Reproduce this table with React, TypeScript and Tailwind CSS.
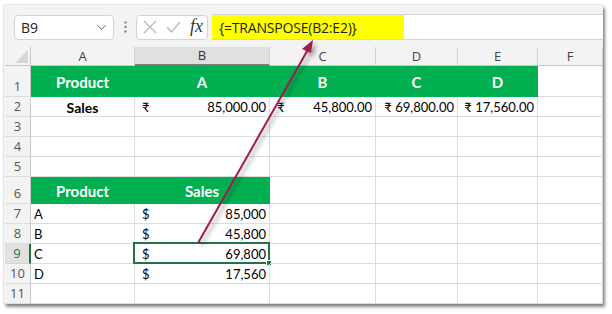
import { ChevronDown } from 'lucide-react'

const cols = ['A', 'B', 'C', 'D', 'E', 'F']
const gridLine = 'border-r border-b border-[#dcdcdc]'

// cell rows, index 0 = row 1
type Cell = { text?: string; cur?: string; kind?: 'head' | 'bold' | 'num' | 'left' | 'inr' }

const rows: { h: string; cells: Cell[] }[] = [
  { h: 'h-[31px]', cells: [{ text: 'Product', kind: 'head' }, { text: 'A', kind: 'head' }, { text: 'B', kind: 'head' }, { text: 'C', kind: 'head' }, { text: 'D', kind: 'head' }, {}] },
  { h: 'h-[20px]', cells: [{ text: 'Sales', kind: 'bold' }, { text: '85,000.00', cur: '₹', kind: 'num' }, { text: '45,800.00', cur: '₹', kind: 'num' }, { text: '₹ 69,800.00', kind: 'inr' }, { text: '₹ 17,560.00', kind: 'inr' }, {}] },
  { h: 'h-[20px]', cells: [{}, {}, {}, {}, {}, {}] },
  { h: 'h-[20px]', cells: [{}, {}, {}, {}, {}, {}] },
  { h: 'h-[20px]', cells: [{}, {}, {}, {}, {}, {}] },
  { h: 'h-[27px]', cells: [{ text: 'Product', kind: 'head' }, { text: 'Sales', kind: 'head' }, {}, {}, {}, {}] },
  { h: 'h-[20px]', cells: [{ text: 'A', kind: 'left' }, { text: '85,000', cur: '$', kind: 'num' }, {}, {}, {}, {}] },
  { h: 'h-[20px]', cells: [{ text: 'B', kind: 'left' }, { text: '45,800', cur: '$', kind: 'num' }, {}, {}, {}, {}] },
  { h: 'h-[20px]', cells: [{ text: 'C', kind: 'left' }, { text: '69,800', cur: '$', kind: 'num' }, {}, {}, {}, {}] },
  { h: 'h-[20px]', cells: [{ text: 'D', kind: 'left' }, { text: '17,560', cur: '$', kind: 'num' }, {}, {}, {}, {}] },
  { h: 'h-[20px]', cells: [{}, {}, {}, {}, {}, {}] },
]

function DataCell({ cell, selected }: { cell: Cell; selected?: boolean }) {
  if (cell.kind === 'head') {
    return (
      <div className="flex items-center justify-center bg-[#00b050] border-r border-b border-[#00b050] pt-[2px] text-[15px] leading-[18px] font-bold text-white">
        {cell.text}
      </div>
    )
  }
  return (
    <div className={`relative flex items-end px-[3px] pb-[1px] text-[13px] leading-[15px] text-black ${gridLine}`}>
      {cell.kind === 'bold' && <span className="w-full text-center text-[14px] font-bold">{cell.text}</span>}
      {cell.kind === 'left' && <span>{cell.text}</span>}
      {cell.kind === 'inr' && <span className="w-full text-right">{cell.text}</span>}
      {cell.kind === 'num' && (
        <div className="flex w-full justify-between pl-[4px]">
          <span>{cell.cur}</span>
          <span>{cell.text}</span>
        </div>
      )}
      {selected && (
        <div className="absolute -left-[2px] -top-[2px] -right-[1px] -bottom-[1px] border-2 border-[#217346]">
          <div className="absolute -right-[4px] -bottom-[4px] w-[6px] h-[6px] bg-[#217346] border border-white" />
        </div>
      )}
    </div>
  )
}

export default function App() {
  return (
    <div className="relative w-[612px] h-[314px] bg-white pt-[5px] pl-[4px] font-['Lato',sans-serif] overflow-hidden">
      <div className="w-[599px] h-[299px] bg-[#f3f3f3] shadow-[2px_3px_3px_rgba(0,0,0,0.45),0_0_2px_rgba(0,0,0,0.25)] overflow-hidden">
        {/* Formula bar */}
        <div className="flex items-center pt-[9px] h-[35px]">
          <div className="ml-[10px] w-[100px] h-[25px] flex items-center justify-between bg-white border border-[#d4d4d4] rounded-[4px] pl-[6px] pr-[4px] text-[14px] text-[#222] font-['Open_Sans',sans-serif]">
            <span>B9</span>
            <ChevronDown className="w-[15px] h-[15px] text-[#555]" strokeWidth={1.5} />
          </div>
          <div className="w-[22px] flex justify-center">
            <svg width="3" height="12" viewBox="0 0 3 12">
              <circle cx="1.5" cy="1.5" r="1.2" fill="#8a8a8a" />
              <circle cx="1.5" cy="6" r="1.2" fill="#8a8a8a" />
              <circle cx="1.5" cy="10.5" r="1.2" fill="#8a8a8a" />
            </svg>
          </div>
          <div className="w-[72px] h-[25px] flex items-center bg-white border border-[#d4d4d4] rounded-[4px] pl-[6px] gap-[9px]">
            <svg width="14" height="14" viewBox="0 0 14 14" stroke="#b8b8b8" strokeWidth="1.3" fill="none">
              <path d="M1 1 L13 13 M13 1 L1 13" />
            </svg>
            <svg width="15" height="12" viewBox="0 0 15 12" stroke="#b8b8b8" strokeWidth="1.3" fill="none">
              <path d="M1 6 L5.5 11 L14 1" />
            </svg>
            <span className="font-['Liberation_Serif',serif] italic text-[18px] leading-none text-[#333] -mt-[2px]">fx</span>
          </div>
          <div className="ml-[4px] flex-1 h-[26px] flex bg-white border-y border-[#d4d4d4]">
            <div className="w-[192px] h-full bg-[#ffff00] flex items-center pl-[7px] text-[14px] text-[#222] font-['Open_Sans',sans-serif] tracking-[-0.2px]">
              {'{=TRANSPOSE(B2:E2)}'}
            </div>
          </div>
        </div>

        {/* Sheet grid */}
        <div className="mt-[7px] ml-[1px] grid grid-cols-[26px_104px_135px_106px_82px_80px_65px] bg-white">
          {/* column headers */}
          <div className="h-[19px] bg-[#f3f3f3] border-r border-b border-[#c8c8c8] flex items-end justify-end p-[2px]">
            <svg width="13" height="13" viewBox="0 0 13 13">
              <polygon points="13,0 13,13 0,13" fill="#d6d6d6" />
            </svg>
          </div>
          {cols.map((c) => (
            <div
              key={c}
              className={`h-[19px] flex items-center justify-center text-[13px] leading-[15px] font-['Open_Sans',sans-serif] ${
                c === 'B'
                  ? 'bg-[#e0e0e0] border-r border-[#d4d4d4] border-b-2 border-b-[#7c7c7c] text-[#333]'
                  : 'bg-[#f3f3f3] border-r border-b border-[#d4d4d4] border-b-[#c8c8c8] text-[#444]'
              }`}
            >
              {c}
            </div>
          ))}

          {rows.map((row, r) => {
            const num = r + 1
            const sel = num === 9
            return [
              <div
                key={`h${num}`}
                className={`${row.h} flex items-end justify-center pb-[2px] text-[13px] leading-[15px] font-['Open_Sans',sans-serif] ${
                  sel
                    ? 'bg-[#e0e0e0] text-[#217346] border-b border-[#d4d4d4] border-r-2 border-r-[#217346]'
                    : 'bg-[#f3f3f3] text-[#555] border-b border-[#dcdcdc] border-r border-r-[#c8c8c8]'
                }`}
              >
                {num}
              </div>,
              ...row.cells.map((cell, i) => (
                <DataCell key={`${num}-${i}`} cell={cell} selected={sel && i === 1} />
              )),
            ]
          })}
        </div>
      </div>

      {/* Arrow from B9 to the formula */}
      <svg className="absolute left-0 top-0 pointer-events-none" width="612" height="314" viewBox="0 0 612 314">
        <defs>
          <filter id="sh" x="-20%" y="-20%" width="140%" height="140%">
            <feDropShadow dx="3" dy="3" stdDeviation="2" floodColor="#000" floodOpacity="0.35" />
          </filter>
        </defs>
        <g filter="url(#sh)">
          <line x1="198" y1="243" x2="310" y2="46" stroke="#9b1b4d" strokeWidth="2" />
          <polygon points="313,40 302,49 311,53" fill="#9b1b4d" />
        </g>
      </svg>
    </div>
  )
}
